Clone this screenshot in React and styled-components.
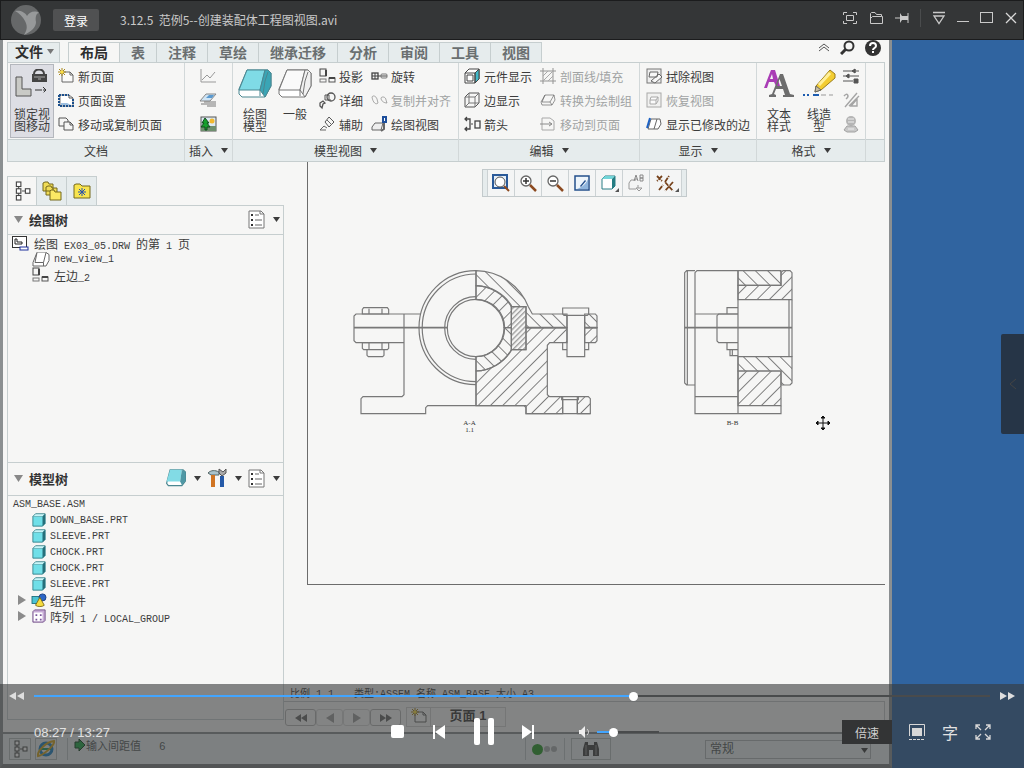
import styled, { createGlobalStyle, css } from 'styled-components';

const GlobalStyle = createGlobalStyle`
    * {
        box-sizing: border-box;
    }

    body {
        margin: 0;
        font-family: "Liberation Sans", "Noto Sans CJK SC", sans-serif;
        font-size: 12px;
        color: #3c3c3c;
    }

    button, input, select {
        font: inherit;
        color: inherit;
        margin: 0;
        padding: 0;
    }

    button {
        border: none;
        background: none;
    }

    svg {
        display: block;
        flex: none;
    }
`;

const line = '#c6cecf';
const shade = '#e6eced';

const Page = styled.div`
    position: relative;
    height: 100vh;
    min-height: 700px;
    display: flex;
    flex-direction: column;
    overflow: hidden;
    background: #3064a0;
`;

/* ---------- player title bar ---------- */

const TitleBar = styled.header`
    height: 40px;
    flex: none;
    display: flex;
    align-items: center;
    padding: 0 6px 0 10px;
    background: #343637;
    border: 1px solid #1b1c1d;
    color: #c9c9c9;
    font-family: "Noto Sans CJK SC", sans-serif;
`;

const Login = styled.button`
    width: 46px;
    height: 22px;
    margin: 0 21px 0 12px;
    border-radius: 2px;
    background: #505152;
    color: #fff;
`;

const FileName = styled.h1`
    flex: 1;
    margin: 0;
    padding-bottom: 2px;
    font-size: 12px;
    font-weight: 400;
    white-space: pre;
`;

const WindowButtons = styled.div`
    display: flex;
    align-items: center;
    gap: 11px;
    padding-bottom: 4px;
`;

const Divider = styled.span`
    width: 1px;
    height: 18px;
    background: #4a4c4d;
`;

/* ---------- recorded desktop ---------- */

const Desktop = styled.main`
    flex: 1;
    min-height: 0;
    display: flex;
    padding-right: 132px;
`;

const Window = styled.section`
    flex: 1;
    min-width: 0;
    display: flex;
    flex-direction: column;
    background: #f6f6f5;
    border: 3px solid #8b8f91;
    border-top: none;
    border-bottom: 4px solid #7b7e80;
`;

const TabRow = styled.nav`
    display: flex;
    height: 22px;
    padding: 2px 4px 0;
`;

const Tab = styled.button`
    height: 20px;
    padding: 0 11px;
    font-size: 14px;
    line-height: 16px;
    font-weight: 700;
    color: #6a6f70;
    background: ${shade};
    border-top: 1px solid ${line};
    border-right: 1px solid ${line};
    white-space: nowrap;
    ${p => p.$active && css`
        color: #2e2e2e;
        background: #f6f6f5;
        border-left: 1px solid ${line};
    `}
    ${p => p.$file && css`
        display: flex;
        align-items: center;
        gap: 4px;
        width: 53px;
        margin-right: 8px;
        padding: 0 0 2px 7px;
        color: #2e2e2e;
        border-left: 1px solid ${line};
    `}
`;

const TabTools = styled.div`
    display: flex;
    gap: 10px;
    align-items: center;
    margin-left: auto;
    padding: 0 4px 9px 0;
`;

const Ribbon = styled.div`
    display: flex;
    height: 100px;
    flex: none;
    margin: 0 4px;
    border: 1px solid ${line};
`;

const Group = styled.section`
    width: ${p => p.$width}px;
    flex: none;
    display: flex;
    flex-direction: column;
    border-right: 1px solid #d2d8d9;
    &:last-child {
        flex: 1;
        border-right: none;
    }
`;

const GroupBody = styled.div`
    flex: 1;
    display: flex;
    align-items: flex-start;
    padding: 1px 2px 0;
    padding-left: ${p => p.$indent || 2}px;
`;

const GroupLabel = styled.footer`
    height: 22px;
    display: flex;
    align-items: center;
    justify-content: center;
    gap: 8px;
    background: ${shade};
    border-top: 1px solid ${line};
`;

const BigButton = styled.button`
    width: ${p => p.$pressed ? 44 : 40}px;
    height: 74px;
    display: flex;
    flex-direction: column;
    align-items: center;
    padding-top: 4px;
    line-height: 12px;
    border: 1px solid transparent;
    margin-right: ${p => p.$pressed ? 4 : 0}px;
    svg {
        margin-bottom: 12px;
    }
    span {
        width: 36px;
        text-align: center;
    }
    ${p => p.$pressed && css`
        background: #dddee4;
        border-color: #b4b7bd;
    `}
    ${p => p.$narrow && css`
        svg {
            margin-bottom: 10px;
        }
        span {
            width: 24px;
        }
    `}
`;

const Column = styled.div`
    width: ${p => p.$width ? p.$width + 'px' : 'auto'};
    margin-left: ${p => p.$gap || 0}px;
`;

const SmallButton = styled.button`
    height: 24px;
    display: flex;
    align-items: center;
    gap: 4px;
    white-space: nowrap;
    color: ${p => p.disabled ? '#a0a3a3' : '#3c3c3c'};
    svg {
        opacity: ${p => p.disabled ? 0.6 : 1};
    }
`;

const Workspace = styled.div`
    flex: 1;
    min-height: 0;
    display: flex;
    padding: 0 4px;
`;

/* ---------- left trees ---------- */

const Side = styled.aside`
    width: 277px;
    flex: none;
    display: flex;
    flex-direction: column;
    padding: 14px 0 12px;
`;

const SideTabs = styled.div`
    display: flex;
    height: 29px;
`;

const SideTab = styled.button`
    width: 30px;
    display: flex;
    align-items: center;
    justify-content: center;
    border: 1px solid ${line};
    border-bottom: none;
    border-left-width: ${p => p.$active ? 1 : 0}px;
    background: ${p => p.$active ? '#f6f6f5' : shade};
`;

const Panel = styled.section`
    flex: 1;
    min-height: 0;
    display: flex;
    flex-direction: column;
    border: 1px solid ${line};
    margin-top: ${p => p.$joined ? -1 : 0}px;
`;

const PanelHead = styled.header`
    height: ${p => p.$tall ? 33 : 29}px;
    display: flex;
    align-items: center;
    gap: 6px;
    padding: 0 3px 2px 6px;
    border-bottom: 1px solid ${line};
`;

const PanelTitle = styled.h2`
    flex: 1;
    margin: 0;
    font-size: 13px;
    font-weight: 700;
    color: #333;
`;

const DropIcon = styled.button`
    display: flex;
    align-items: center;
    gap: 8px;
`;

const Tree = styled.ul`
    list-style: none;
    margin: 0;
    padding: 0 0 0 4px;
`;

const TreeRow = styled.li`
    height: 16px;
    display: flex;
    align-items: center;
    gap: ${p => p.$gap || 4}px;
    padding-left: ${p => p.$indent || 0}px;
    white-space: pre;
`;

const Mono = styled.span`
    font-family: "Liberation Mono", monospace;
    font-size: 10px;
`;

/* ---------- drawing area ---------- */

const Canvas = styled.div`
    flex: 1;
    min-width: 0;
    display: flex;
    flex-direction: column;
`;

const Sheet = styled.div`
    position: relative;
    height: 423px;
    flex: none;
    margin-left: 23px;
    border-left: 1px solid #6c6c6c;
    border-bottom: 1px solid #6c6c6c;
    display: flex;
    flex-direction: column;
`;

const ViewBar = styled.div`
    align-self: center;
    display: flex;
    height: 28px;
    margin: 7px 24px 0 0;
    padding: 0 4px;
    background: ${shade};
    border: 1px solid #c3cacc;
`;

const ViewButton = styled.button`
    width: ${p => p.$wide ? 33 : 27}px;
    display: flex;
    align-items: center;
    justify-content: center;
    background: #f4f5f5;
    border-left: 1px solid #ccd2d4;
    &:last-child {
        border-right: 1px solid #ccd2d4;
    }
`;

const Views = styled.div`
    display: flex;
    gap: 84px;
    padding: 71px 0 0 44px;
`;

const View = styled.figure`
    margin: 0;
`;

const Caption = styled.figcaption`
    padding: 5px 12px 0 0;
    font-family: "Liberation Serif", serif;
    font-size: 7px;
    line-height: 7px;
    text-align: center;
    white-space: pre-line;
    color: #333;
`;

const Pointer = styled.svg`
    position: absolute;
    left: 507px;
    top: 253px;
`;

const SheetInfo = styled.div`
    margin-top: auto;
    height: 12px;
    padding-left: 6px;
    display: flex;
    gap: 20px;
    line-height: 12px;
    font-family: "Liberation Mono", "Noto Sans CJK SC", monospace;
    font-size: 10px;
`;

const PageNav = styled.div`
    height: 31px;
    display: flex;
    align-items: flex-start;
    padding: 5px 0 0 1px;
    border-top: 1px solid #c2c5c7;
    border-right: 1px solid #c2c5c7;
`;

const PageButton = styled.button`
    width: ${p => p.$wide ? 31 : 27}px;
    height: 17px;
    margin-top: 2px;
    display: flex;
    align-items: center;
    justify-content: center;
    color: ${p => p.disabled ? '#9d9d9d' : '#6a6a6a'};
    border: 1px solid ${p => p.disabled ? '#d5d5d5' : '#b5b5b5'};
    border-radius: 3px;
`;

const NewPage = styled.button`
    width: 25px;
    height: 20px;
    margin-left: 5px;
    display: flex;
    justify-content: center;
    border: 1px solid #cfcfcf;
`;

const PageTab = styled.button`
    width: 75px;
    height: 20px;
    padding-bottom: 2px;
    line-height: 16px;
    font-size: 13px;
    font-weight: 700;
    border: 1px solid #d2d2d2;
    border-left: none;
`;

const StatusBar = styled.footer`
    height: 32px;
    flex: none;
    display: flex;
    align-items: center;
    padding: 0 18px 0 6px;
    background: ${shade};
    border-top: 2px solid #8b8f91;
    color: #555b5c;
`;

const StatusButton = styled.button`
    width: ${p => p.$wide ? 40 : 22}px;
    height: 22px;
    margin-right: 4px;
    display: flex;
    align-items: center;
    justify-content: center;
    border: 1px solid #b5bbbc;
`;

const StatusRule = styled.span`
    width: 1px;
    height: 22px;
    margin: 0 6px;
    background: #bcc3c5;
`;

const Message = styled.p`
    flex: 1;
    margin: 0;
    display: flex;
    align-items: center;
    gap: 0;
    padding-bottom: 9px;
    font-size: 11px;
    white-space: pre;
`;

const Lamp = styled.span`
    width: ${p => p.$on ? 11 : 6}px;
    height: ${p => p.$on ? 11 : 6}px;
    margin-right: 1px;
    border-radius: 50%;
    background: ${p => p.$on ? '#2a9a2a' : '#a9adae'};
`;

const Filter = styled.select`
    width: 166px;
    height: 19px;
    margin-left: 90px;
    padding-left: 4px;
    appearance: none;
    border: 1px solid #b0b5b6;
    border-radius: 0;
    background: transparent;
`;

const FilterBox = styled.label`
    position: relative;
    svg {
        position: absolute;
        right: 3px;
        top: 8px;
    }
`;

/* ---------- player controls over the picture ---------- */

const Controls = styled.div`
    position: absolute;
    left: 0;
    right: 0;
    bottom: 0;
    height: 84px;
    background: rgba(55, 56, 57, 0.6);
    color: #e2e2e2;
`;

const SeekRow = styled.div`
    height: 24px;
    display: flex;
    align-items: center;
    gap: 10px;
    padding: 0 9px;
`;

const Range = styled.input`
    appearance: none;
    flex: ${p => p.$small ? 'none' : 1};
    width: ${p => p.$small ? 62 : 100}px;
    height: 12px;
    background: none;
    &::-webkit-slider-runnable-track {
        height: 2px;
        background: linear-gradient(to right, #42a5ff ${p => p.$played}%, #494b4c ${p => p.$played}%);
    }
    &::-webkit-slider-thumb {
        appearance: none;
        width: 9px;
        height: 9px;
        margin-top: -3px;
        border-radius: 50%;
        background: #fff;
    }
`;

const ControlRow = styled.div`
    height: 48px;
    display: grid;
    grid-template-columns: 1fr auto 1fr;
    align-items: center;
    padding: 0 9px 0 34px;
`;

const Time = styled.time`
    font-size: 13px;
`;

const Transport = styled.div`
    display: flex;
    align-items: center;
    gap: 28px;
    color: #fff;
`;

const Volume = styled.label`
    display: flex;
    align-items: center;
    gap: 6px;
    margin-left: 16px;
`;

const Extras = styled.div`
    display: flex;
    align-items: center;
    justify-content: flex-end;
    gap: 17px;
    padding-right: 24px;
`;

const Speed = styled.button`
    width: 50px;
    height: 24px;
    background: #333435;
    color: #cfcfcf;
`;

const Subtitle = styled.button`
    font-size: 16px;
    line-height: 20px;
    font-family: "Noto Sans CJK SC", sans-serif;
`;

const Drawer = styled.button`
    position: absolute;
    right: 0;
    top: 334px;
    width: 23px;
    height: 100px;
    display: flex;
    align-items: center;
    justify-content: center;
    background: #263547;
    border-radius: 2px 0 0 2px;
`;

const Arrow = ({ color = '#3c3c3c', size = 7 }) => (
  <svg width={size} height={size > 7 ? 7 : 5} viewBox="0 0 8 5" preserveAspectRatio="none"><path d="M0 0H8L4 5Z" fill={color} /></svg>
);

const PageIcon = () => (
  <path d="M4 4H12L15 7V14H4Z" fill="#fafafa" stroke="#666" />
);

// 16px glyphs of the ribbon, trees and toolbars
const glyphs = {
  newPage: <><PageIcon /><path d="M12 4V7H15" fill="none" stroke="#666" /><path d="M4 0V8M0 4H8M1 1L7 7M7 1L1 7" stroke="#a8861b" /><circle cx="4" cy="4" r="1.6" fill="#ffe13e" /></>,
  pageSetup: <><path d="M2 3H11L15 6V14H2Z" fill="#fff" stroke="#777" /><path d="M11 3V6H15" fill="none" stroke="#555" /><path d="M1 3H11M1 3V14H15V7" fill="none" stroke="#1b4f8c" strokeWidth="2" strokeDasharray="2 1" /><path d="M3 11H9L13 13H3Z" fill="#9dbfe0" /></>,
  movePage: <><path d="M1 2H8L10 4V10H1Z" fill="#f6f6f5" stroke="#555" /><path d="M6 6H12L15 9V14H6Z" fill="#f6f6f5" stroke="#555" /><path d="M12 6V9H15" fill="none" stroke="#555" /></>,
  graph: <path d="M1 1V14H16M2 12L7 7L10 10L15 4" fill="none" stroke="#999" />,
  layers: <><path d="M6 2H16L10 9H0Z" fill="#cfe4f4" stroke="#888" /><path d="M9 3H14L12 6H6Z" fill="#5a9ad0" /><path d="M4 10H16M1 12H16M7 14H16" stroke="#777" /></>,
  picture: <><rect x="1" y="1" width="15" height="14" fill="#dceaf2" stroke="#555" /><circle cx="12" cy="5" r="2.500" fill="#f2b82f" /><path d="M1 10H16V15H1Z" fill="#6f8f6f" /><path d="M5 2L2 7H4L1 11H5V14H7V11H10L7 7H9Z" fill="#17a02d" stroke="#114d1c" /></>,
  projection: <><rect x="1" y="1" width="6" height="7" fill="none" stroke="#444" /><path d="M7 2V8" stroke="#444" strokeWidth="2" /><rect x="1" y="11" width="6" height="3" fill="none" stroke="#777" /><rect x="10" y="10" width="6" height="4" fill="none" stroke="#555" /><path d="M10 10H16" stroke="#444" strokeWidth="2" /></>,
  detail: <><circle cx="12" cy="5" r="4" fill="none" stroke="#555" strokeWidth="1.300" /><path d="M6 3H10V8H12M6 3V8H10" fill="none" stroke="#555" /><path d="M1 11L4 9L6 11L4 12L3 16L1 14Z" fill="none" stroke="#555" strokeWidth="1.300" /></>,
  auxiliary: <><path d="M10 1L15 6L10 11L6 6Z" fill="none" stroke="#555" /><path d="M8 4L13 9M7 14H1L5 10L8 12" fill="none" stroke="#666" /></>,
  rotate: <><rect x="1" y="5" width="6" height="6" fill="none" stroke="#444" strokeWidth="1.300" /><path d="M4 5V11M1 8H16" stroke="#444" /><rect x="10" y="6" width="6" height="4" rx="1" fill="none" stroke="#777" /></>,
  copyAlign: <path d="M1 5C2 3 5 4 6 7L7 11C5 13 2 11 1 5ZM10 6C11 4 15 5 15 8L16 11C13 11 10 9 10 6Z" fill="none" stroke="#777" />,
  drawView: <><path d="M4 7H12L10 14H1V11Z" fill="#eee" stroke="#666" /><path d="M13 7V13L10 15" fill="none" stroke="#666" strokeWidth="2" /><rect x="11" y="0" width="5" height="7" fill="#1d4e9b" /><path d="M13.500 2V5" stroke="#fff" /></>,
  partShow: <><path d="M5 1H15V11L11 15H1V5Z" fill="#fff" stroke="#444" /><path d="M11 5L15 1V11L11 15Z" fill="#41b8c8" stroke="#444" /><path d="M1 5H11V15M3 7H9V13H3Z" fill="none" stroke="#444" /></>,
  edgeShow: <><path d="M5 1H15V11L11 15H1V5Z" fill="none" stroke="#555" /><path d="M5 1V11L1 15M5 11H15M11 5V15M11 5L15 1M1 5H11" fill="none" stroke="#777" /></>,
  arrows: <><path d="M1 3H6V13H1M3 1L1 3L3 5M3 11L1 13L3 15" fill="none" stroke="#444" strokeWidth="1.300" /><rect x="11" y="5" width="5" height="7" fill="none" stroke="#444" strokeWidth="1.300" /><path d="M7 8H9" stroke="#444" /></>,
  hatch: <><path d="M3 0V16M13 0V16M0 3H16M0 13H16" stroke="#555" /><path d="M3 8L8 3M3 13L13 3M8 13L13 8" stroke="#777" /></>,
  convert: <path d="M5 3H14L15 8L12 13H2L1 10ZM5 3L2 10H10L14 3M10 10L12 13" fill="none" stroke="#555" />,
  moveSheet: <><path d="M2 2H10L14 5V14H2Z" fill="none" stroke="#777" /><path d="M0 8H12M9 6L12 8L9 10" fill="none" stroke="#444" /></>,
  erase: <><rect x="1" y="1" width="14" height="14" fill="#eee" stroke="#777" /><path d="M4 4H12L11 9H3ZM5 13L13 6L16 9L9 15Z" fill="#f7f7f7" stroke="#666" /></>,
  restore: <><rect x="1" y="1" width="14" height="14" fill="#eee" stroke="#777" /><path d="M5 5H12V9L10 12H4V8ZM4 8H10V12M10 8L12 5" fill="#fff" stroke="#777" /></>,
  changed: <><path d="M5 3H14L15 8L12 13H2ZM11 3L8 13" fill="#fff" stroke="#666" /><path d="M4 2L1 12" stroke="#1d62c4" strokeWidth="2" /></>,
  sliders: <path d="M0 3H16M0 8H16M0 13H10M12 1V5M5 6V10M3 8L6 6V10ZM9 3L12 1V5ZM11 11H15V15H11Z" fill="#555" stroke="#555" />,
  symbol: <path d="M1 4C4 0 7 4 3 7M2 15L14 1M14 7V14H8ZM6 14L16 4" fill="none" stroke="#a5a5a5" strokeWidth="1.4" />,
  stamp: <><circle cx="8" cy="5" r="5" fill="#b5b5b5" /><path d="M4 10L1 14L4 16H12L15 14L12 10Z" fill="#c8c8c8" stroke="#a2a2a2" /><path d="M5 3H11M5 6H11M5 13H11" stroke="#eee" /></>,
  treeTab: <><path d="M5 4V13M8 8H12" stroke="#555" /><rect x="3" y="0" width="4" height="4" fill="#fff" stroke="#444" /><rect x="3" y="6" width="4" height="4" fill="#fff" stroke="#444" /><rect x="3" y="12" width="4" height="4" fill="#fff" stroke="#444" /><rect x="11" y="6" width="4" height="4" fill="#fff" stroke="#444" /></>,
  sheetNode: <><rect x=".5" y="1.500" width="14" height="11" fill="#fff" stroke="#333" /><path d="M3 4V9H10V7H5V4Z" fill="none" stroke="#222" /><rect x="8" y="12" width="8" height="3" fill="#fff" stroke="#1c2f9b" /></>,
  part: <><path d="M4 1H15V12L12 15H1V4Z" fill="#70dfe8" stroke="#317f88" /><path d="M4 1H15L12 4H1Z" fill="#c9f5f7" stroke="#317f88" strokeWidth=".5" /><path d="M15 1V12L12 15V4Z" fill="#256f7a" /></>,
  components: <><rect x="0" y="4" width="9" height="8" fill="#4bc3d3" stroke="#1b6b7a" /><circle cx="12" cy="5" r="4" fill="#2c66c6" stroke="#163c80" /><path d="M9 5L14 14C12 16 6 16 4 14Z" fill="#f6dc3f" stroke="#7a6812" /></>,
  pattern: <><path d="M1 3L3 1H15V13L13 15H1Z" fill="#c7acd6" stroke="#6b4a82" /><rect x="2" y="4" width="10" height="10" fill="#fff" /><path d="M4 6H6V8H4ZM9 6H11V8H9ZM4 11H6V13H4ZM9 11H11V13H9Z" fill="#79569b" /></>,
  fit: <><rect x="0" y="0" width="14" height="13" fill="#e5eef7" stroke="#2a5a99" strokeWidth="2" /><circle cx="7" cy="7" r="5" fill="#fff" stroke="#555" /><path d="M11 11L16 16" stroke="#8c4a20" strokeWidth="2" /></>,
  zoomIn: <><circle cx="6" cy="6" r="5" fill="#fff" stroke="#666" strokeWidth="1.300" /><path d="M3 6H9M6 3V9" stroke="#333" strokeWidth="1.5" /><path d="M10 10L16 16" stroke="#8c4a20" strokeWidth="2.500" /></>,
  zoomOut: <><circle cx="6" cy="6" r="5" fill="#fff" stroke="#666" strokeWidth="1.300" /><path d="M3 6H9" stroke="#333" strokeWidth="1.5" /><path d="M10 10L16 16" stroke="#8c4a20" strokeWidth="2.500" /></>,
  repaint: <><rect x="1" y="1" width="14" height="14" fill="#eef5fb" stroke="#24508c" strokeWidth="1.500" /><path d="M3 14C6 13 12 10 14 4V14Z" fill="#8fb5dd" /><path d="M6 11L11 5L12 6L7 12Z" fill="#24508c" /></>,
  shading: <><path d="M1 4L4 1H14V11L11 14H1Z" fill="#fff" stroke="#2a7f86" /><path d="M1 4L4 1H14L11 4Z" fill="#72d5d8" /><path d="M11 4L14 1V11L11 14Z" fill="#237c82" /><path d="M18 13V17H14Z" fill="#555" /></>,
  annotate: <><path d="M1 8L3 5H8M1 8V14H8M10 10V13M8 13H14L11 16Z" fill="none" stroke="#999" /><path d="M6 6L8 0L10 6M7 4H9M12 0V6H15V3H12H15V0Z" fill="none" stroke="#888" /></>,
  datum: <><path d="M-1 1L4 6M4 1L-1 6M1 15L5 10M7 7L11 1M7 7L15 16M15 7L7 16" stroke="#76421b" strokeWidth="1.8" strokeDasharray="5 1" /><path d="M21 13V17H17Z" fill="#555" /></>,
};

const Glyph = ({ name, size = 16 }) => (
  <svg width={size} height={size} viewBox="0 0 16 16" overflow="visible" aria-hidden="true">{glyphs[name]}</svg>
);

const Small = ({ icon, children, disabled }) => (
  <SmallButton disabled={disabled}>
    <Glyph name={icon} />
    {children}
  </SmallButton>
);

const Block = ({ front, side, edge }) => (
  <svg width="34" height="30" viewBox="0 0 34 30">
    <path d="M9 1H30L33 4V17L27 28H4L1 25V20Z" fill="#fff" stroke={edge} />
    <path d="M9 1H27L22 21H1Z" fill={front} stroke={edge} />
    <path d="M27 1H30L33 4V17L27 28L22 21Z" fill={side} stroke={edge} />
    <path d="M30 3L27 12L25 25M22 21V27" fill="none" stroke={edge} />
  </svg>
);

const FolderIcon = ({ stacked }) => (
  <svg width="20" height="20" viewBox="0 0 20 20">
    {stacked && <path d="M1 10V2L3 1L6 1L7 3H11V10ZM4 14V6L6 5H9L10 7H15V14Z" fill="#f0dc56" stroke="#75691c" />}
    {stacked
      ? <path d="M8 19V10L9 9H12L13 11H19V19Z" fill="#fbe964" stroke="#75691c" />
      : <><path d="M2 17V4L4 3H8L10 5H18V17Z" fill="#f8e44e" stroke="#75691c" /><path d="M10 7V15M6 11H14M7 8L13 14M13 8L7 14" stroke="#2a52a8" /></>}
  </svg>
);

const ListIcon = () => (
  <svg width="17" height="19" viewBox="0 0 17 19">
    <path d="M1 1H13L16 4V18H1Z" fill="#fff" stroke="#777" />
    <path d="M12 1V4H16" fill="none" stroke="#777" />
    <path d="M7 5H11M7 10H14M7 15H14" stroke="#666" />
    <path d="M3 5H5M3 10H5M3 15H5" stroke="#333" strokeWidth="2" />
  </svg>
);

const ToolsIcon = () => (
  <svg width="20" height="20" viewBox="0 0 20 20">
    <path d="M1 5C4 2 8 2 12 4V7H4Z" fill="#a9c3cc" stroke="#566" />
    <path d="M6 7V19" stroke="#d07422" strokeWidth="4" />
    <path d="M15 8V19" stroke="#255aa8" strokeWidth="4" />
    <path d="M12 1V5L15 8L19 5V1L16 4Z" fill="#aaa" stroke="#555" />
  </svg>
);

const parts = ['DOWN_BASE.PRT', 'SLEEVE.PRT', 'CHOCK.PRT', 'CHOCK.PRT', 'SLEEVE.PRT'];
const tabs = ['表', '注释', '草绘', '继承迁移', '分析', '审阅', '工具', '视图'];

const Hatches = () => (
  <defs>
    <pattern id="fall" width="26" height="26" patternUnits="userSpaceOnUse" patternTransform="rotate(-45)"><path d="M13 0V26" stroke="#7c7c7c" strokeWidth="3" /></pattern>
    <pattern id="rise" width="26" height="26" patternUnits="userSpaceOnUse" patternTransform="rotate(45)"><path d="M13 0V26" stroke="#7c7c7c" strokeWidth="3" /></pattern>
    <pattern id="dense" width="11" height="11" patternUnits="userSpaceOnUse" patternTransform="rotate(45)"><path d="M5 0V11" stroke="#7c7c7c" strokeWidth="3" /></pattern>
  </defs>
);

const FrontView = () => (
  <svg width="247" height="147" viewBox="35 38 741 441" fill="none" stroke="#787878" strokeWidth="3.500">
    <Hatches />
    <path d="M407 46A171 171 0 0 1 564 154L576 176H680V217H557V154H513A128 128 0 0 0 407 91Z" fill="url(#fall)" />
    <path d="M407 91A128 128 0 0 1 513 150V217H491A86 86 0 0 0 407 133Z" fill="url(#rise)" />
    <path d="M407 347A128 128 0 0 0 513 285V217H491A86 86 0 0 1 407 304Z" fill="url(#fall)" />
    <path d="M407 347A128 128 0 0 0 513 283H557V217H680V262H628L621 270V418L628 424H667V475H557V451H407Z" fill="url(#rise)" />
    <path d="M711 424H744L750 430V475H711Z" fill="url(#rise)" />
    <path d="M733 176H765L770 182V217H733Z" fill="url(#fall)" />
    <path d="M733 217H770V256L765 262H733Z" fill="url(#rise)" />
    <rect x="513" y="154" width="44" height="129" fill="url(#dense)" />
    <path d="M407 46A171 171 0 0 0 407 388M407 56A161 161 0 0 0 407 379M407 124A94 94 0 0 0 407 312" />
    <circle cx="407" cy="218" r="86" />
    <path d="M407 46V133M407 304V451" />
    <path d="M240 176H47L41 182V256L47 262H191M191 176V418L185 424H68L62 430V475H256V457L262 451H551L557 457V475H750" />
    <path d="M41 217H321M557 217H680M733 217H771" strokeWidth="5" />
    <path d="M70 157H141L145 162V176H66V162ZM86 160V176M125 160V176M66 262H145V279L141 283H70L66 279ZM86 262V281M125 262V281M80 283H131V300L127 304H84L80 300Z" />
    <path d="M667 158H745V176L741 180H671L667 176ZM680 180V304H733V180M667 262V283H680M733 283H745V262" />
    <path d="M664 424H714V433H664ZM667 433V475M711 433V475" />
  </svg>
);

const SideView = () => (
  <svg width="111" height="147" viewBox="68 38 333 441" fill="none" stroke="#787878" strokeWidth="3.500">
    <path d="M233 46H362V90H233Z" fill="url(#fall)" />
    <path d="M233 90H362V52L368 46H389L395 52V133H233Z" fill="url(#rise)" />
    <path d="M233 304H395V383L389 389H362V347H233Z" fill="url(#fall)" />
    <path d="M233 347H362V451H233Z" fill="url(#rise)" />
    <path d="M104 46H79L73 52V383L79 389H104M81 46V389" />
    <path d="M104 52L110 46H233V475H104ZM104 176H233M104 424H233M233 475H362V451M395 133V304M386 133V304" />
    <path d="M73 217H395" strokeWidth="5" />
    <path d="M233 176H175L170 181V257L175 262H233M200 176V157H233M200 262V283H233M209 283V301H233M216 283V301" />
  </svg>
);

const App = () => {
  const played = 62.8;
  return (
    <Page>
      <GlobalStyle />
      <TitleBar>
        <svg width="30" height="30" viewBox="0 0 30 30">
          <circle cx="15" cy="15" r="15" fill="#666869" />
          <path d="M4 6C9 5 14 7 16 11C18 7 24 5 28 8C25 8 24 13 25 17C25 22 21 26 13 30C17 24 16 20 14 16C12 12 8 8 4 6Z" fill="#97999a" />
        </svg>
        <Login>登录</Login>
        <FileName>{'3.12.5  范例5--创建装配体工程图视图.avi'}</FileName>
        <WindowButtons>
          <button aria-label="迷你模式"><svg width="14" height="14" viewBox="0 0 14 14" fill="none" stroke="#c9c9c9"><path d="M.5 4V1.500H4M10 1.500H13.500V4M13.500 10V12.500H10M4 12.500H.5V10M3.500 4.500H10.500V9.500H3.500Z" /></svg></button>
          <button aria-label="打开文件"><svg width="16" height="14" viewBox="0 0 16 14" fill="none" stroke="#c9c9c9"><path d="M2.500 12.500V2.500L3.500 1.500H7L8.500 3.500H13.500V5.500H4.500L2.500 7.500M2.500 12.500H14.500V5.500H13.500" /></svg></button>
          <button aria-label="置顶"><svg width="14" height="14" viewBox="0 0 14 14"><path d="M0 7H6M13 2V12" stroke="#c9c9c9" /><path d="M5 2L7 5H13V9H7L5 12Z" fill="#c9c9c9" /></svg></button>
          <Divider />
          <button aria-label="菜单"><svg width="14" height="14" viewBox="0 0 14 14" fill="none" stroke="#c9c9c9"><path d="M1 1.500H13M2 5H12L7 12.500Z" strokeWidth="1.300" /></svg></button>
          <button aria-label="最小化"><svg width="12" height="14"><path d="M0 10.500H12" stroke="#c9c9c9" /></svg></button>
          <button aria-label="最大化"><svg width="14" height="14"><rect x=".5" y="1.500" width="12" height="10" fill="none" stroke="#c9c9c9" /></svg></button>
          <button aria-label="关闭"><svg width="12" height="14"><path d="M1 2L11 12M11 2L1 12" stroke="#d9d9d9" strokeWidth="1.300" /></svg></button>
        </WindowButtons>
      </TitleBar>

      <Desktop>
        <Window>
          <TabRow>
            <Tab $file>文件 <Arrow color="#777" /></Tab>
            <Tab $active>布局</Tab>
            {tabs.map(t => <Tab key={t}>{t}</Tab>)}
            <TabTools>
              <button aria-label="折叠功能区"><svg width="12" height="10" viewBox="0 0 12 10" fill="none" stroke="#555"><path d="M1 5L6 1L11 5M1 8L6 4L11 8" /></svg></button>
              <button aria-label="搜索"><svg width="15" height="15" viewBox="0 0 15 15" fill="none" stroke="#333"><circle cx="9" cy="6" r="4.500" strokeWidth="2" /><path d="M6 9L1 14" strokeWidth="3" /></svg></button>
              <button aria-label="帮助"><svg width="16" height="16" viewBox="0 0 16 16"><circle cx="8" cy="8" r="8" fill="#333" /><path d="M5 6C5 2 11 2 11 6C11 8 8 8 8 10M8 11V13" fill="none" stroke="#fff" strokeWidth="2" /></svg></button>
            </TabTools>
          </TabRow>

          <Ribbon>
            <Group $width={177}>
              <GroupBody>
                <BigButton $pressed>
                  <svg width="34" height="28" viewBox="0 0 34 28">
                    <path d="M1 8H7V20H16V27H1Z" fill="#c9cac6" stroke="#555" />
                    <path d="M19 5C19 -1 29 -1 29 5" fill="none" stroke="#444" strokeWidth="2" />
                    <path d="M17 5H32V13H17Z" fill="#444" />
                    <path d="M19 8H30M23 10H26" stroke="#aaa" />
                    <path d="M20 21H31M28 18L31 21L28 24" fill="none" stroke="#333" strokeDasharray="7 1" />
                  </svg>
                  <span>锁定视图移动</span>
                </BigButton>
                <Column>
                  <Small icon="newPage">新页面</Small>
                  <Small icon="pageSetup">页面设置</Small>
                  <Small icon="movePage">移动或复制页面</Small>
                </Column>
              </GroupBody>
              <GroupLabel>文档</GroupLabel>
            </Group>
            <Group $width={48}>
              <GroupBody $indent={15}>
                <Column>
                  <Small icon="graph" />
                  <Small icon="layers" />
                  <Small icon="picture" />
                </Column>
              </GroupBody>
              <GroupLabel>插入 <Arrow /></GroupLabel>
            </Group>
            <Group $width={226}>
              <GroupBody>
                <BigButton $narrow><Block front="#7fdbe6" side="#3aa5b5" edge="#4b8791" /><span>绘图模型</span></BigButton>
                <BigButton $narrow><Block front="#fafafa" side="#f1f1f1" edge="#777" /><span>一般</span></BigButton>
                <Column $width={52} $gap={4}>
                  <Small icon="projection">投影</Small>
                  <Small icon="detail">详细</Small>
                  <Small icon="auxiliary">辅助</Small>
                </Column>
                <Column>
                  <Small icon="rotate">旋转</Small>
                  <Small icon="copyAlign" disabled>复制并对齐</Small>
                  <Small icon="drawView">绘图视图</Small>
                </Column>
              </GroupBody>
              <GroupLabel>模型视图 <Arrow /></GroupLabel>
            </Group>
            <Group $width={181}>
              <GroupBody $indent={5}>
                <Column $width={76}>
                  <Small icon="partShow">元件显示</Small>
                  <Small icon="edgeShow">边显示</Small>
                  <Small icon="arrows">箭头</Small>
                </Column>
                <Column>
                  <Small icon="hatch" disabled>剖面线/填充</Small>
                  <Small icon="convert" disabled>转换为绘制组</Small>
                  <Small icon="moveSheet" disabled>移动到页面</Small>
                </Column>
              </GroupBody>
              <GroupLabel>编辑 <Arrow /></GroupLabel>
            </Group>
            <Group $width={117}>
              <GroupBody $indent={6}>
                <Column>
                  <Small icon="erase">拭除视图</Small>
                  <Small icon="restore" disabled>恢复视图</Small>
                  <Small icon="changed">显示已修改的边</Small>
                </Column>
              </GroupBody>
              <GroupLabel>显示 <Arrow /></GroupLabel>
            </Group>
            <Group $width={109}>
              <GroupBody>
                <BigButton $narrow>
                  <svg width="30" height="30" viewBox="0 0 30 30">
                    <path d="M0 19L7 1H11L16 17H12L10 13H5L3 19ZM6 10H9L8 5Z" fill="#a93cb5" />
                    <path d="M5 28V26L8 25L16 5H19L26 25L30 26V28H19V26H21L19 20H12L10 25L12 26V28ZM13 17H18L15.500 10Z" fill="#6d6d6d" />
                  </svg>
                  <span>文本样式</span>
                </BigButton>
                <BigButton $narrow>
                  <svg width="34" height="30" viewBox="0 0 34 30">
                    <path d="M28 1L33 5V9L19 21L13 23L14 17Z" fill="#f3cd32" stroke="#9b7d1b" />
                    <path d="M28 4L17 16" stroke="#fff09b" strokeWidth="3" />
                    <path d="M14 17L19 21L13 23Z" fill="#c9bfa4" stroke="#666" />
                    <path d="M1 26H3M5 26H7M11 26H17" stroke="#1c5cb0" strokeWidth="2" />
                    <path d="M19 26H24M27 26H31" stroke="#999" strokeWidth="1" />
                  </svg>
                  <span>线造型</span>
                </BigButton>
                <Column $gap={4}>
                  <Small icon="sliders" />
                  <Small icon="symbol" />
                  <Small icon="stamp" />
                </Column>
              </GroupBody>
              <GroupLabel>格式 <Arrow /></GroupLabel>
            </Group>
            <Group>
              <GroupBody />
              <GroupLabel />
            </Group>
          </Ribbon>

          <Workspace>
            <Side>
              <SideTabs>
                <SideTab $active aria-label="模型树"><Glyph name="treeTab" size={18} /></SideTab>
                <SideTab aria-label="文件夹浏览器"><FolderIcon stacked /></SideTab>
                <SideTab aria-label="收藏夹"><FolderIcon /></SideTab>
              </SideTabs>
              <Panel>
                <PanelHead>
                  <Arrow color="#888" size={9} />
                  <PanelTitle>绘图树</PanelTitle>
                  <DropIcon aria-label="设置"><ListIcon /><Arrow /></DropIcon>
                </PanelHead>
                <Tree>
                  <TreeRow $gap={6}><Glyph name="sheetNode" /><span>绘图<Mono> EX03_05.DRW </Mono>的第<Mono> 1 </Mono>页</span></TreeRow>
                  <TreeRow $indent={20}><svg width="18" height="15" viewBox="0 0 34 30" fill="#fff" stroke="#666" strokeWidth="2"><path d="M9 1H27L33 5V17L27 28H1V21Z" /><path d="M9 1L5 21H22L27 1M22 21V28" /></svg><Mono>new_view_1</Mono></TreeRow>
                  <TreeRow $indent={20} $gap={6}><Glyph name="projection" /><span>左边<Mono>_2</Mono></span></TreeRow>
                </Tree>
              </Panel>
              <Panel $joined>
                <PanelHead $tall>
                  <Arrow color="#888" size={9} />
                  <PanelTitle>模型树</PanelTitle>
                  <DropIcon aria-label="显示">
                    <svg width="20" height="18" viewBox="0 0 34 30"><path d="M7 1H29L33 5V20L27 28H4L1 24Z" fill="#fff" stroke="#4b8791" strokeWidth="2" /><path d="M7 1H27L24 21H1Z" fill="#82dbe5" /><path d="M27 1L33 5V20L27 27L24 21Z" fill="#4f98a5" /></svg>
                    <Arrow />
                  </DropIcon>
                  <DropIcon aria-label="工具"><ToolsIcon /><Arrow /></DropIcon>
                  <DropIcon aria-label="设置"><ListIcon /><Arrow /></DropIcon>
                </PanelHead>
                <Tree>
                  <TreeRow $indent={1}><Mono>ASM_BASE.ASM</Mono></TreeRow>
                  {parts.map((p, i) => (
                    <TreeRow key={i} $indent={20}><Glyph name="part" size={14} /><Mono>{p}</Mono></TreeRow>
                  ))}
                  <TreeRow $indent={5}><svg width="11" height="10"><path d="M1 0L9 5L1 10Z" fill="#8b8b8b" /></svg><Glyph name="components" size={14} />组元件</TreeRow>
                  <TreeRow $indent={5}><svg width="11" height="10"><path d="M1 0L9 5L1 10Z" fill="#8b8b8b" /></svg><Glyph name="pattern" size={14} /><span>阵列<Mono> 1 / LOCAL_GROUP</Mono></span></TreeRow>
                </Tree>
              </Panel>
            </Side>

            <Canvas>
              <Sheet>
                <ViewBar>
                  <ViewButton aria-label="重新调整"><Glyph name="fit" /></ViewButton>
                  <ViewButton aria-label="放大"><Glyph name="zoomIn" /></ViewButton>
                  <ViewButton aria-label="缩小"><Glyph name="zoomOut" /></ViewButton>
                  <ViewButton aria-label="重画"><Glyph name="repaint" /></ViewButton>
                  <ViewButton aria-label="显示样式"><Glyph name="shading" /></ViewButton>
                  <ViewButton aria-label="注释显示"><Glyph name="annotate" /></ViewButton>
                  <ViewButton $wide aria-label="基准显示"><Glyph name="datum" /></ViewButton>
                </ViewBar>
                <Views>
                  <View>
                    <FrontView />
                    <Caption>{'A-A\n1.1'}</Caption>
                  </View>
                  <View>
                    <SideView />
                    <Caption>B-B</Caption>
                  </View>
                </Views>
                <Pointer width="16" height="16" viewBox="0 0 16 16" stroke="#111" strokeWidth="1">
                  <path d="M8 1V15M1 8H15" />
                  <path d="M8 1L6 3H10ZM8 15L6 13H10ZM1 8L3 6V10ZM15 8L13 6V10Z" fill="#111" />
                </Pointer>
              </Sheet>
              <SheetInfo>
                <span>比例.1.1</span>
                <span>类型:ASSEM  名称.ASM_BASE  大小.A3</span>
              </SheetInfo>
              <PageNav>
                <PageButton $wide aria-label="首页"><svg width="12" height="8"><path d="M6 0V8L0 4ZM12 0V8L6 4Z" fill="currentColor" /></svg></PageButton>
                <PageButton disabled aria-label="上一页"><svg width="8" height="10"><path d="M8 0V10L0 5Z" fill="currentColor" /></svg></PageButton>
                <PageButton disabled aria-label="下一页"><svg width="8" height="10"><path d="M0 0V10L8 5Z" fill="currentColor" /></svg></PageButton>
                <PageButton $wide aria-label="末页"><svg width="12" height="8"><path d="M0 0V8L6 4ZM6 0V8L12 4Z" fill="currentColor" /></svg></PageButton>
                <NewPage aria-label="新页面"><Glyph name="newPage" /></NewPage>
                <PageTab>页面 1</PageTab>
              </PageNav>
            </Canvas>
          </Workspace>

          <StatusBar>
            <StatusButton aria-label="导航器"><Glyph name="treeTab" /></StatusButton>
            <StatusButton aria-label="浏览器">
              <svg width="18" height="18" viewBox="0 0 18 18"><circle cx="9" cy="9" r="6" fill="none" stroke="#1c7fc4" strokeWidth="3" /><path d="M4 9H14" stroke="#1c9a6a" strokeWidth="2" /><path d="M1 16C0 12 8 2 17 1C18 5 7 15 1 16Z" fill="none" stroke="#d3a41c" strokeWidth="2" /></svg>
            </StatusButton>
            <StatusRule />
            <Message>
              <svg width="12" height="14" viewBox="0 0 12 14"><path d="M1 4H5V1L11 7L5 13V10H1Z" fill="#1fa548" stroke="#12401f" /></svg>
              {'输入间距值      6'}
            </Message>
            <StatusRule />
            <Lamp $on /><Lamp /><Lamp />
            <StatusRule />
            <StatusButton $wide aria-label="查找">
              <svg width="18" height="16" viewBox="0 0 18 16"><path d="M3 1H6V4H12V1H15L17 8V15H11V9H7V15H1V8Z" fill="#444" /><path d="M4 4V14M14 4V14" stroke="#999" /></svg>
            </StatusButton>
            <FilterBox>
              <Filter aria-label="过滤器" defaultValue="常规"><option>常规</option></Filter>
              <Arrow />
            </FilterBox>
          </StatusBar>
        </Window>
      </Desktop>

      <Drawer aria-label="播放列表"><svg width="8" height="12"><path d="M7 1L1 6L7 11" fill="none" stroke="#444" /></svg></Drawer>

      <Controls>
        <SeekRow>
          <button aria-label="快退"><svg width="15" height="8"><path d="M7 0V8L0 4ZM15 0V8L8 4Z" fill="#dedede" /></svg></button>
          <Range type="range" aria-label="进度" max="807" defaultValue="507" $played={played} />
          <button aria-label="快进"><svg width="15" height="8"><path d="M0 0V8L7 4ZM8 0V8L15 4Z" fill="#dedede" /></svg></button>
        </SeekRow>
        <ControlRow>
          <Time>08:27 / 13:27</Time>
          <Transport>
            <button aria-label="停止"><svg width="14" height="14"><rect width="13" height="13" rx="2" fill="#fff" /></svg></button>
            <button aria-label="上一个"><svg width="13" height="14"><path d="M1 0V14" stroke="#fff" strokeWidth="2" /><path d="M12 0V14L2 7Z" fill="#fff" /></svg></button>
            <button aria-label="暂停"><svg width="20" height="28"><rect width="6" height="27" rx="2" fill="#fff" /><rect x="14" width="6" height="27" rx="2" fill="#fff" /></svg></button>
            <button aria-label="下一个"><svg width="13" height="14"><path d="M11 0V14" stroke="#fff" strokeWidth="2" /><path d="M0 0V14L10 7Z" fill="#fff" /></svg></button>
            <Volume>
              <svg width="12" height="12" viewBox="0 0 12 12"><path d="M0 4H2L6 0V12L2 8H0Z" fill="#eee" /><path d="M8 3C10 5 10 7 8 9" fill="none" stroke="#ddd" /></svg>
              <Range type="range" aria-label="音量" $small defaultValue="23" $played={27} />
            </Volume>
          </Transport>
          <Extras>
            <Speed>倍速</Speed>
            <button aria-label="截图"><svg width="16" height="16" viewBox="0 0 16 16"><path d="M.5 12V.5H15.500V12" fill="none" stroke="#d8d8d8" /><path d="M0 15.500H16" stroke="#d8d8d8" strokeDasharray="3 1" /><rect x="3" y="4" width="10" height="8" fill="#d8d8d8" /></svg></button>
            <Subtitle>字</Subtitle>
            <button aria-label="全屏"><svg width="16" height="16" viewBox="0 0 16 16" stroke="#d8d8d8" strokeWidth="1.300" fill="none"><path d="M1 5V1H5M1 1L6 6M11 1H15V5M15 1L10 6M1 11V15H5M1 15L6 10M15 11V15H11M15 15L10 10" /></svg></button>
          </Extras>
        </ControlRow>
      </Controls>
    </Page>
  );
};

export default App;
